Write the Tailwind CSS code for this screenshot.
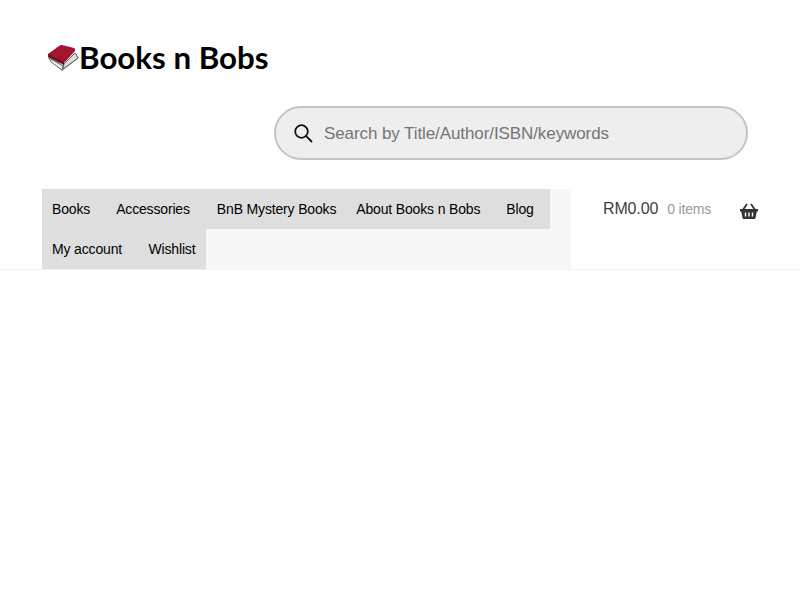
<!doctype html>
<html><head><meta charset="utf-8"><script src="https://cdn.jsdelivr.net/npm/@tailwindcss/browser@4"></script></head>
<body class="bg-white font-['Liberation_Sans',sans-serif] overflow-hidden">
<div class="w-[800px] h-[600px] flex flex-col">
<header class="h-[270px] border-b border-[#f0f0f0] flex flex-col">
  <div class="pl-[47px] pt-[38px] h-[106px] flex items-start">
    <div class="flex items-center h-[38px]">
      <svg width="33" height="28" viewBox="0 0 33 28" class="shrink-0 mt-px">
        <path d="M1 14 L15 27 L32 14 L29 10 L15 21 L4 12 Z" fill="#8f8f8f"/>
        <path d="M2 14 L4 18 L15 26 L16 22 Z" fill="#efefef" stroke="#6f6f6f" stroke-width="1"/>
        <path d="M16 25 L31 14 L28 9 L17 20 Z" fill="#dedede" stroke="#666" stroke-width="1"/>
        <path d="M1 10 L12 2 Q13 1 15 1 L27 4 Q29 5 28 7 L18 18 Q17 19 15 18 L2 13 Z" fill="#a3142e"/>
        <path d="M1 10 L17 18 L17 21 L1 13 Z" fill="#6d0f20"/>
      </svg>
      <span class="-ml-px -mt-px font-['Lato',sans-serif] font-bold text-[31.3px] leading-[38px] text-black">Books n Bobs</span>
    </div>
  </div>
  <div class="flex justify-end pr-[52px]">
    <div class="w-[474px] h-[54px] rounded-[27px] border-2 border-[#c4c4c4] bg-[#eeeeee] flex items-center pl-[17px]">
      <svg width="20" height="20" viewBox="0 0 20 20" fill="none" stroke="#111" stroke-width="1.8" class="shrink-0">
        <circle cx="8.5" cy="8.5" r="6.3"/><path d="M13.2 13.2 L18.5 18.5" stroke-linecap="round"/>
      </svg>
      <span class="ml-[11px] mt-px text-[17px] tracking-[-0.09px] text-[#757575] whitespace-nowrap">Search by Title/Author/ISBN/keywords</span>
    </div>
  </div>
  <div class="flex mt-[29px] pl-[42px]">
    <nav class="w-[529px] h-[80px] bg-[#f7f7f7] flex flex-wrap content-start text-[14px] tracking-[-0.16px] text-black">
      <a class="h-10 leading-10 pl-[10px] pr-[13px] bg-[#dedede]">Books</a>
      <a class="h-10 leading-10 pl-[13px] pr-[13px] bg-[#dedede]">Accessories</a>
      <a class="h-10 leading-10 pl-[14px] pr-[10px] bg-[#dedede]">BnB Mystery Books</a>
      <a class="h-10 leading-10 pl-[10px] pr-[13px] bg-[#dedede]">About Books n Bobs</a>
      <a class="h-10 leading-10 pl-[13px] pr-[16px] bg-[#dedede]">Blog</a>
      <a class="h-10 leading-10 pl-[10px] pr-[13px] bg-[#dedede]">My account</a>
      <a class="h-10 leading-10 pl-[13.5px] pr-[10.5px] bg-[#dedede]">Wishlist</a>
    </nav>
    <div class="flex items-start pt-[10px] h-[40px] ml-[32px] whitespace-nowrap">
      <span class="text-[16px] tracking-[-0.15px] leading-[20px] text-[#404040]">RM0.00</span>
      <span class="ml-[9px] text-[14px] tracking-[-0.15px] leading-[20px] text-[#999999]">0 items</span>
      <svg width="18" height="16" viewBox="0 0 18 16" class="ml-[29px] mt-[4px] shrink-0" fill="#333333">
        <path d="M0 6 H18 V8.5 H16.8 L15.5 15 Q15.4 16 14.5 16 H3.5 Q2.6 16 2.5 15 L1.2 8.5 H0 Z"/>
        <path d="M3.2 6.5 L7 1 M14.8 6.5 L11 1" stroke="#333333" stroke-width="1.8" fill="none"/>
        <path d="M5.5 9.5 V13.5 M9 9.5 V13.5 M12.5 9.5 V13.5" stroke="#fff" stroke-width="1.4" fill="none"/>
      </svg>
    </div>
  </div>
</header>
<main class="flex-1 bg-[#fefefe]"></main>
</div>
</body></html>
